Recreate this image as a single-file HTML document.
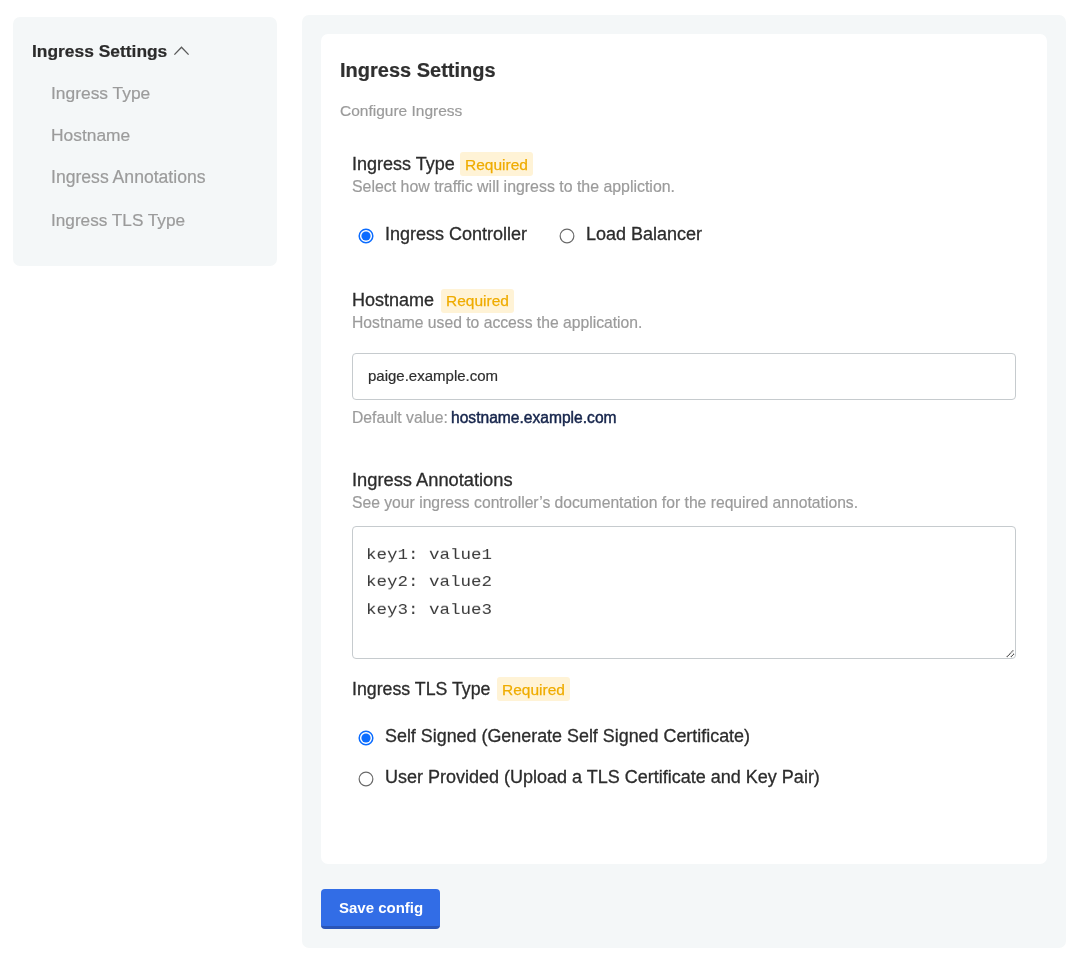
<!DOCTYPE html>
<html>
<head>
<meta charset="utf-8">
<style>
html,body{margin:0;padding:0;background:#fff;width:1090px;height:969px;overflow:hidden;position:relative;}
body{font-family:"Liberation Sans",sans-serif;color:#323232;}
.abs{-webkit-text-stroke:0.2px currentColor;}
.abs{position:absolute;white-space:pre;will-change:transform;}
.panel{position:absolute;background:#f4f7f8;}
.card{position:absolute;background:#fff;}
.side-title{font-size:17.4px;line-height:22px;font-weight:700;color:#2b2b2b;}
.side-item{font-size:17.4px;line-height:22px;color:#9b9b9b;}
.title{font-size:20px;line-height:24px;font-weight:700;color:#2f2f2f;}
.subtitle{font-size:15.5px;line-height:20px;color:#9b9b9b;}
.label{font-size:18px;line-height:24px;color:#2c2c2c;-webkit-text-stroke:0.3px #2c2c2c;}
.desc{font-size:15.7px;line-height:20px;color:#9b9b9b;}
.badge{position:absolute;background:#fff3d6;border-radius:3px;height:24px;width:73px;}
.badge span{position:absolute;left:5px;will-change:transform;top:2.7px;font-size:15.5px;line-height:20px;color:#efac00;white-space:pre;-webkit-text-stroke:0.25px #efac00;}
.radio{position:absolute;box-sizing:border-box;width:15px;height:15px;border-radius:50%;}
.radio.on{border:1.5px solid #0b6cff;}
.radio.on::after{content:"";position:absolute;left:1.5px;top:1.5px;width:9px;height:9px;border-radius:50%;background:#0b6cff;}
.radio.off{border:1px solid #767676;background:#fff;}
.input{position:absolute;box-sizing:border-box;border:1px solid #c6cbce;border-radius:4px;background:#fff;}
.mono{font-family:"Liberation Mono",monospace;font-size:17.5px;line-height:27px;color:#3a3a3a;-webkit-text-stroke:0 !important;transform:scaleY(0.83);transform-origin:0 18px;}
</style>
</head>
<body>
<!-- Sidebar -->
<div class="panel" style="left:13px;top:16.5px;width:264px;height:249.5px;border-radius:7px;"></div>
<div class="abs side-title" style="left:32px;top:40px;">Ingress Settings</div>
<svg class="abs" style="left:172px;top:44.5px;" width="19" height="13" viewBox="0 0 19 13">
  <path d="M2.4 9.6 L9.5 2.3 L16.6 9.6" fill="none" stroke="#5a5a5a" stroke-width="1.35"/>
</svg>
<div class="abs side-item" style="left:50.5px;top:81.5px;">Ingress Type</div>
<div class="abs side-item" style="left:50.5px;top:124px;">Hostname</div>
<div class="abs side-item" style="left:50.5px;top:166px;font-size:17.6px;">Ingress Annotations</div>
<div class="abs side-item" style="left:50.5px;top:208.5px;font-size:17.2px;">Ingress TLS Type</div>

<!-- Main panel -->
<div class="panel" style="left:302px;top:15px;width:764px;height:933px;border-radius:7px;"></div>
<div class="card" style="left:321px;top:34px;width:726px;height:830px;border-radius:7px;"></div>

<div class="abs title" style="left:339.5px;top:58px;">Ingress Settings</div>
<div class="abs subtitle" style="left:339.5px;top:101px;">Configure Ingress</div>

<!-- Ingress Type -->
<div class="abs label" style="left:351.5px;top:152px;">Ingress Type</div>
<div class="badge" style="left:460px;top:152px;"><span>Required</span></div>
<div class="abs desc" style="left:352px;top:177px;font-size:15.9px;">Select how traffic will ingress to the appliction.</div>
<svg class="abs" style="left:356px;top:225.9px;" width="20" height="20" viewBox="0 0 20 20"><circle cx="10" cy="10" r="6.8" fill="#fff" stroke="#0b6cff" stroke-width="1.5"/><circle cx="10" cy="10" r="4.6" fill="#0b6cff"/></svg>
<div class="abs label" style="left:384.5px;top:222px;">Ingress Controller</div>
<svg class="abs" style="left:557px;top:225.5px;" width="20" height="20" viewBox="0 0 20 20"><circle cx="10" cy="10" r="6.85" fill="#fff" stroke="#6a6a6a" stroke-width="1.2"/></svg>
<div class="abs label" style="left:585.5px;top:222px;">Load Balancer</div>

<!-- Hostname -->
<div class="abs label" style="left:352px;top:288px;">Hostname</div>
<div class="badge" style="left:441px;top:288.5px;"><span>Required</span></div>
<div class="abs desc" style="left:352px;top:313px;">Hostname used to access the application.</div>
<div class="input" style="left:352px;top:353px;width:664px;height:47px;"></div>
<div class="abs" style="left:368px;top:366px;font-size:15px;line-height:20px;color:#2e2e2e;">paige.example.com</div>
<div class="abs desc" style="left:352px;top:408px;">Default value:</div>
<div class="abs desc" style="left:451px;top:408px;color:#14234a;font-size:15.6px;-webkit-text-stroke:0.45px #14234a;">hostname.example.com</div>

<!-- Annotations -->
<div class="abs label" style="left:352px;top:468px;font-size:18.3px;">Ingress Annotations</div>
<div class="abs desc" style="left:352px;top:493px;">See your ingress controller’s documentation for the required annotations.</div>
<div class="input" style="left:352px;top:526px;width:664px;height:133px;"></div>
<svg class="abs" style="left:1002px;top:645px;" width="14" height="14" viewBox="0 0 14 14">
  <path d="M5.2 11.5 L11.7 5.0 M9.3 11.5 L11.7 9.1" stroke="#444" stroke-width="1.25" stroke-linecap="round" stroke-dasharray="0.01 1.6" fill="none"/>
</svg>
<div class="abs mono" style="left:366px;top:541px;">key1: value1</div>
<div class="abs mono" style="left:366px;top:568px;">key2: value2</div>
<div class="abs mono" style="left:366px;top:595.5px;">key3: value3</div>

<!-- TLS -->
<div class="abs label" style="left:352px;top:677px;font-size:17.75px;">Ingress TLS Type</div>
<div class="badge" style="left:497px;top:677px;"><span>Required</span></div>
<svg class="abs" style="left:356px;top:727.8px;" width="20" height="20" viewBox="0 0 20 20"><circle cx="10" cy="10" r="6.8" fill="#fff" stroke="#0b6cff" stroke-width="1.5"/><circle cx="10" cy="10" r="4.6" fill="#0b6cff"/></svg>
<div class="abs label" style="left:384.5px;top:724px;font-size:17.9px;">Self Signed (Generate Self Signed Certificate)</div>
<svg class="abs" style="left:356px;top:769px;" width="20" height="20" viewBox="0 0 20 20"><circle cx="10" cy="10" r="6.85" fill="#fff" stroke="#6a6a6a" stroke-width="1.2"/></svg>
<div class="abs label" style="left:384.5px;top:765px;">User Provided (Upload a TLS Certificate and Key Pair)</div>

<!-- Button -->
<div class="abs" style="left:321px;top:889px;width:119px;height:39.5px;box-sizing:border-box;background:#326de6;border-bottom:3px solid #2a55b8;border-radius:4px;"></div>
<div class="abs" style="left:339px;top:897.5px;font-size:15px;line-height:20px;font-weight:700;color:#fff;-webkit-text-stroke:0;">Save config</div>
</body>
</html>
